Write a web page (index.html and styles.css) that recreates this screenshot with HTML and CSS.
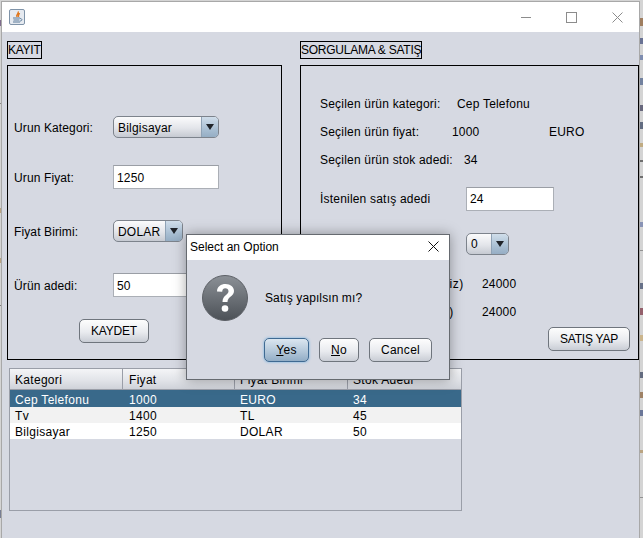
FILE: index.html
```html
<!DOCTYPE html>
<html lang="tr">
<head>
    <meta charset="UTF-8">
    <meta name="viewport" content="width=device-width, initial-scale=1.0">
    <title>Urun Kayit</title>
    <link rel="stylesheet" href="styles.css">
</head>
<body>
    <svg class="behind" width="643" height="538">
        <rect x="640" y="18" width="3" height="8" fill="#8a5a30"/>
        <rect x="640" y="38" width="3" height="6" fill="#3c4a78"/>
        <rect x="640" y="55" width="3" height="5" fill="#5a6fa0"/>
        <rect x="640" y="78" width="3" height="7" fill="#4a5f88"/>
        <rect x="640" y="105" width="3" height="6" fill="#3a3a58"/>
        <rect x="640" y="122" width="3" height="7" fill="#33415f"/>
        <rect x="640" y="143" width="3" height="4" fill="#b89a60"/>
        <rect x="640" y="160" width="3" height="2" fill="#444"/>
        <rect x="640" y="176" width="3" height="2" fill="#444"/>
        <rect x="640" y="222" width="3" height="5" fill="#6a78a8"/>
        <rect x="640" y="250" width="3" height="1" fill="#777"/>
        <rect x="640" y="283" width="3" height="6" fill="#3a4868"/>
        <rect x="640" y="308" width="3" height="7" fill="#7a3040"/>
        <rect x="640" y="335" width="3" height="6" fill="#c8a870"/>
        <rect x="640" y="372" width="3" height="6" fill="#34405c"/>
        <rect x="640" y="392" width="3" height="6" fill="#8a6038"/>
        <rect x="640" y="410" width="3" height="6" fill="#405080"/>
        <rect x="640" y="450" width="3" height="3" fill="#b09060"/>
        <rect x="640" y="497" width="3" height="1" fill="#777"/>
        <rect x="0" y="20" width="1" height="6" fill="#5a4070"/>
        <rect x="0" y="103" width="1" height="1" fill="#666"/>
        <rect x="0" y="208" width="1" height="5" fill="#b09060"/>
        <rect x="0" y="258" width="1" height="5" fill="#b09060"/>
        <rect x="0" y="305" width="1" height="1" fill="#555"/>
        <rect x="0" y="510" width="1" height="8" fill="#505a78"/>
    </svg>

    <div class="window">
        <div class="titlebar">
            <svg class="app-icon" width="16" height="16" viewBox="0 0 16 16">
                <rect x="0.5" y="0.5" width="15" height="15" rx="1.5" fill="#e6eaf0" stroke="#7f93a8"/>
                <path d="M9 2.5C10.5 4.5 6.5 5.5 8 8M10.5 4C10 5.5 9 6 9.5 8" fill="none" stroke="#e0761c" stroke-width="1.4"/>
                <path d="M4 9H11M4.5 11H10.5M4 13H11" stroke="#5b7a99" stroke-width="1.2"/>
                <path d="M11 9.5C13.5 9.5 13.5 12 11 12" fill="none" stroke="#5b7a99"/>
            </svg>
            <div class="win-controls">
                <svg width="10" height="10" viewBox="0 0 10 10"><path d="M0 5.5H10" stroke="#8c8c8c"/></svg>
                <svg width="11" height="11" viewBox="0 0 11 11"><rect x="0.5" y="0.5" width="10" height="10" fill="none" stroke="#8c8c8c"/></svg>
                <svg width="11" height="11" viewBox="0 0 11 11"><path d="M0.5 0.5L10.5 10.5M10.5 0.5L0.5 10.5" stroke="#8c8c8c"/></svg>
            </div>
        </div>

        <div class="content">
            <div class="columns">
                <section class="col-kayit">
                    <div class="box-title">KAYIT</div>
                    <div class="panel panel-kayit">
                        <div class="form-row">
                            <label>Urun Kategori:</label>
                            <div class="combo combo-kategori"><span>Bilgisayar</span><i class="arrow"></i></div>
                        </div>
                        <div class="form-row row-fiyat">
                            <label>Urun Fiyat:</label>
                            <div class="field field-wide">1250</div>
                        </div>
                        <div class="form-row row-birim">
                            <label>Fiyat Birimi:</label>
                            <div class="combo combo-birim"><span>DOLAR</span><i class="arrow"></i></div>
                        </div>
                        <div class="form-row row-adet">
                            <label>Ürün adedi:</label>
                            <div class="field field-wide">50</div>
                        </div>
                        <button class="btn btn-kaydet">KAYDET</button>
                    </div>
                </section>

                <section class="col-satis">
                    <div class="box-title">SORGULAMA &amp; SATIŞ</div>
                    <div class="panel panel-satis">
                        <div class="info-row"><span class="l-kategori">Seçilen ürün kategori:</span><span>Cep Telefonu</span></div>
                        <div class="info-row row-gap"><span class="l-fiyat">Seçilen ürün fiyat:</span><span class="l-tutar">1000</span><span>EURO</span></div>
                        <div class="info-row row-gap"><span class="l-stok">Seçilen ürün stok adedi:</span><span>34</span></div>
                        <div class="info-row row-istenen"><span class="l-istenen">İstenilen satış adedi</span><div class="field field-adet">24</div></div>
                        <div class="info-row row-indirim"><span class="l-istenen">İndirim oranı</span><div class="combo combo-indirim"><span>0</span><i class="arrow"></i></div></div>
                        <div class="info-row row-toplam"><span class="l-toplam">Toplam Fiyat (İndirimsiz)</span><span>24000</span></div>
                        <div class="info-row row-gap"><span class="l-toplam">Toplam Fiyat (İndirimli)</span><span>24000</span></div>
                        <button class="btn btn-satis">SATIŞ YAP</button>
                    </div>
                </section>
            </div>

            <div class="table-wrap">
                <table>
                    <thead>
                        <tr><th>Kategori</th><th>Fiyat</th><th>Fiyat Birimi</th><th>Stok Adedi</th></tr>
                    </thead>
                    <tbody>
                        <tr class="selected"><td>Cep Telefonu</td><td>1000</td><td>EURO</td><td>34</td></tr>
                        <tr class="alt"><td>Tv</td><td>1400</td><td>TL</td><td>45</td></tr>
                        <tr class="plain"><td>Bilgisayar</td><td>1250</td><td>DOLAR</td><td>50</td></tr>
                    </tbody>
                </table>
            </div>
        </div>

        <div class="dialog">
            <div class="dialog-title">
                <span>Select an Option</span>
                <svg width="11" height="11" viewBox="0 0 11 11"><path d="M0.5 0.5L10.5 10.5M10.5 0.5L0.5 10.5" stroke="#111"/></svg>
            </div>
            <div class="dialog-body">
                <div class="dialog-msg">
                    <svg width="46" height="46" viewBox="0 0 46 46">
                        <defs>
                            <linearGradient id="qbg" x1="0" y1="0" x2="0" y2="1">
                                <stop offset="0" stop-color="#8b9096"/>
                                <stop offset="1" stop-color="#4c5157"/>
                            </linearGradient>
                        </defs>
                        <circle cx="23" cy="23" r="22.5" fill="url(#qbg)" stroke="#5c6066"/>
                        <path d="M15 16.5C15 11.5 19 9 23.5 9C28.5 9 32 12 32 16C32 21.5 25.5 21.5 25.5 27H20.5C20.5 20 26.5 20 26.5 16.2C26.5 14.3 25.2 13.2 23.3 13.2C21.2 13.2 20.2 14.7 20.2 16.8Z" fill="#fff"/>
                        <circle cx="23" cy="33.5" r="3.3" fill="#fff"/>
                    </svg>
                    <p>Satış yapılsın mı?</p>
                </div>
                <div class="dialog-buttons">
                    <button class="btn btn-yes"><u>Y</u>es</button>
                    <button class="btn btn-no"><u>N</u>o</button>
                    <button class="btn btn-cancel">Cancel</button>
                </div>
            </div>
        </div>
    </div>
</body>
</html>
```

FILE: styles.css
```css
html, body {
    margin: 0;
    padding: 0;
    height: 538px;
    overflow: hidden;
}

body {
    background-color: #d4d4d4;
    font-family: "Liberation Sans", Arial, sans-serif;
    font-size: 12px;
    letter-spacing: 0.2px;
    color: #000;
    position: relative;
}

.behind {
    position: absolute;
    left: 0;
    top: 0;
    opacity: 0.7;
}

.window {
    position: absolute;
    left: 1px;
    top: 1px;
    width: 637px;
    height: 537px;
    border: 1px solid #a8a8a8;
    border-bottom: none;
    background-color: #d6d9e2;
}

.titlebar {
    height: 30px;
    background-color: #fff;
    display: flex;
    align-items: center;
    justify-content: space-between;
    padding-left: 7px;
}

.win-controls {
    display: flex;
    align-items: center;
    gap: 35px;
    padding-right: 16px;
}

.content {
    padding: 9px 0 0 5px;
}

.columns {
    display: flex;
    gap: 18px;
}

.col-kayit {
    width: 275px;
}

.col-satis {
    width: 339px;
}

.box-title {
    display: inline-block;
    vertical-align: top;
    height: 16px;
    line-height: 16px;
    border: 1px solid #000;
    letter-spacing: -0.25px;
}

.panel {
    box-sizing: border-box;
    height: 295px;
    margin-top: 6px;
    border: 1px solid #000;
}

.panel-kayit {
    padding: 50px 0 0 6px;
}

.form-row {
    display: flex;
    align-items: center;
}

.form-row label {
    width: 99px;
    padding-top: 2px;
    letter-spacing: 0.12px;
}

.panel-kayit .combo span {
    padding-top: 2px;
}

.panel-kayit .field {
    line-height: 24px;
}

.row-fiyat {
    margin-top: 27px;
}

.row-birim {
    margin-top: 31px;
}

.row-adet {
    margin-top: 31px;
}

.combo {
    box-sizing: border-box;
    height: 22px;
    display: flex;
    align-items: center;
    justify-content: space-between;
    border: 1px solid #7d838c;
    border-radius: 5px;
    background: linear-gradient(#fbfbfc, #e3e5ea 55%, #c6cad2);
    padding-left: 4px;
    overflow: hidden;
}

.combo-kategori {
    width: 106px;
}

.combo-birim {
    width: 70px;
}

.combo-indirim {
    width: 43px;
}

.arrow {
    position: relative;
    width: 16px;
    height: 22px;
    border-left: 1px solid #8fa2b5;
    background: linear-gradient(#d3e0ec, #a9bfd3 60%, #93abc2);
}

.arrow::after {
    content: "";
    position: absolute;
    left: 4px;
    top: 8px;
    border-left: 4px solid transparent;
    border-right: 4px solid transparent;
    border-top: 6px solid #20242a;
}

.field {
    box-sizing: border-box;
    height: 24px;
    line-height: 22px;
    border: 1px solid #abafb6;
    border-top-color: #9a9ea5;
    background-color: #fff;
    padding-left: 3px;
}

.field-wide {
    width: 106px;
}

.field-adet {
    width: 88px;
}

.btn {
    box-sizing: border-box;
    height: 24px;
    padding: 0;
    border: 1px solid #6f757d;
    border-radius: 5px;
    background: linear-gradient(#fdfdfd, #e9ebef 55%, #c9cdd5);
    font-family: inherit;
    font-size: 12px;
    letter-spacing: 0.3px;
    color: #000;
}

.btn-kaydet {
    display: block;
    width: 70px;
    margin: 22px 0 0 65px;
    letter-spacing: -0.2px;
}

.panel-satis {
    padding: 28px 8px 0 19px;
}

.info-row {
    display: flex;
    align-items: center;
    height: 20px;
}

.row-gap {
    margin-top: 8px;
}

.row-istenen {
    margin-top: 17px;
    height: 24px;
}

.row-indirim {
    margin-top: 22px;
    height: 22px;
}

.row-toplam {
    margin-top: 19px;
}

.l-kategori {
    width: 137px;
}

.l-fiyat {
    width: 132px;
}

.l-tutar {
    width: 97px;
}

.l-stok {
    width: 144px;
}

.l-istenen {
    width: 146px;
}

.l-toplam {
    width: 162px;
    letter-spacing: 0.55px;
}

.btn-satis {
    display: block;
    width: 82px;
    margin: 5px 0 0 auto;
    letter-spacing: -0.25px;
}

.table-wrap {
    box-sizing: border-box;
    width: 453px;
    height: 143px;
    margin: 8px 0 0 2px;
    border: 1px solid #9a9ea8;
    letter-spacing: 0.3px;
}

table {
    width: 451px;
    border-collapse: separate;
    border-spacing: 0;
    table-layout: fixed;
}

th {
    height: 21px;
    padding: 2px 0 0 5px;
    box-sizing: border-box;
    font-weight: normal;
    text-align: left;
    background: linear-gradient(#f4f5f7, #e2e4e9 55%, #cfd2d9);
    border-right: 1px solid #9a9ea8;
    border-bottom: 1px solid #9a9ea8;
}

th:last-child {
    border-right: none;
}

th:first-child {
    width: 113px;
}

th:nth-child(2) {
    width: 112px;
    padding-left: 6px;
}

th:nth-child(3) {
    width: 113px;
}

td {
    padding: 2px 0 0 5px;
    height: 16px;
    line-height: 14px;
    box-sizing: border-box;
}

td:nth-child(2) {
    padding-left: 6px;
}

.selected td {
    height: 17px;
    padding-top: 3px;
    background-color: #39698a;
    color: #fff;
}

.alt td {
    background-color: #f2f2f2;
}

.plain td {
    background-color: #fff;
}

.dialog {
    position: absolute;
    left: 184px;
    top: 232px;
    box-sizing: border-box;
    width: 264px;
    height: 146px;
    border: 1px solid #666a70;
    background-color: #d6d9e2;
    box-shadow: 0 0 12px rgba(0, 0, 0, 0.35);
}

.dialog-title {
    box-sizing: border-box;
    height: 25px;
    background-color: #fff;
    display: flex;
    align-items: center;
    justify-content: space-between;
    padding: 0 10px 2px 3px;
    letter-spacing: 0;
}

.dialog-body {
    padding: 15px 17px 0 15px;
}

.dialog-msg {
    display: flex;
    align-items: center;
    gap: 17px;
    height: 46px;
    letter-spacing: 0.1px;
}

.dialog-msg p {
    margin: 0;
}

.dialog-buttons {
    display: flex;
    justify-content: flex-end;
    gap: 10px;
    margin-top: 17px;
}

.btn-yes {
    width: 45px;
    border-color: #3f6a92;
    background: linear-gradient(#dbe6f0, #b4c8da 55%, #92adc6);
    box-shadow: 0 0 2px 1px #a7c6e2;
}

.btn-no {
    width: 40px;
}

.btn-cancel {
    width: 63px;
}
```
